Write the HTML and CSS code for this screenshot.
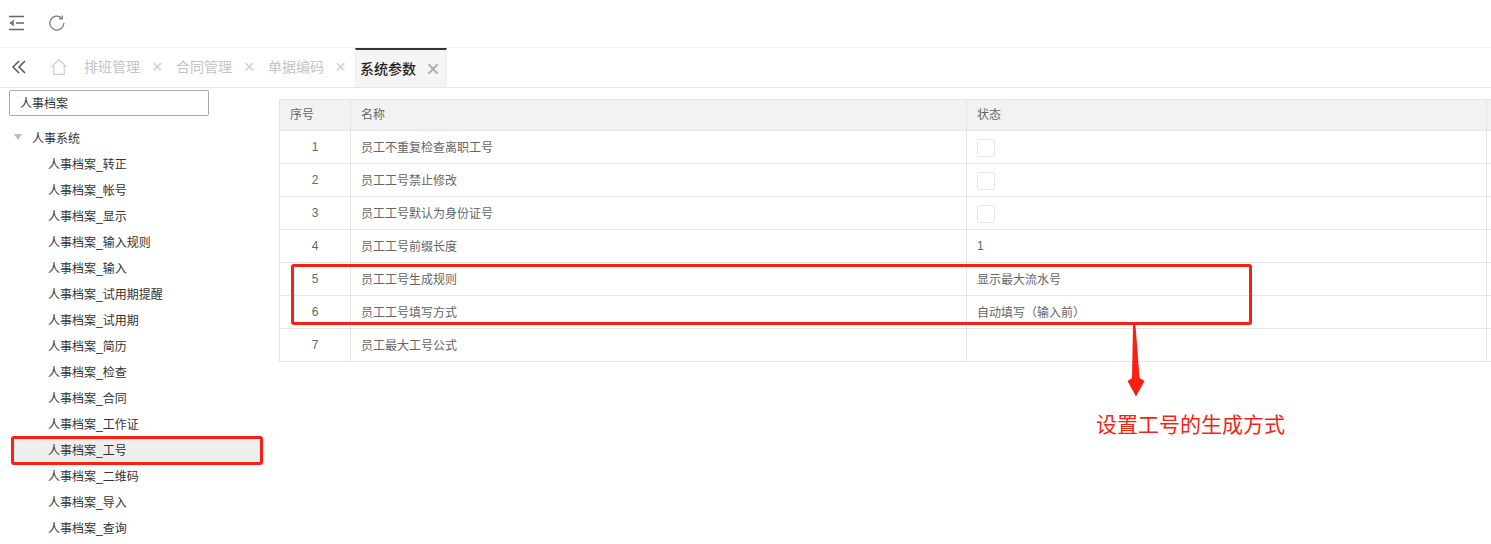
FILE: index.html
```html
<!DOCTYPE html>
<html lang="zh-CN">
<head>
<meta charset="utf-8">
<title>系统参数</title>
<link rel="stylesheet" href="styles.css">
</head>
<body>
<header class="toolbar">
  <svg class="tool-icon" width="16" height="16" viewBox="0 0 16 16" fill="none" stroke="#666" stroke-width="1.5">
    <path d="M0 1.5H15M7 8H15M0 14.5H15"/>
    <path d="M5 5.5L1.5 8L5 10.5" stroke-width="1.4"/>
    <path d="M2 8H5"/>
  </svg>
  <svg class="tool-icon" width="16" height="16" viewBox="0 0 16 16" fill="none" stroke="#777" stroke-width="1.2">
    <path d="M12.5 2.8A7 7 0 1 0 14.9 8"/>
    <path d="M13.3 0.5V3.8H10"/>
  </svg>
</header>
<nav class="tabs">
  <svg class="collapse" width="14" height="14" viewBox="0 0 14 14" fill="none" stroke="#555" stroke-width="1.5">
    <path d="M7 1L1 7L7 13M13 1L7 7L13 13"/>
  </svg>
  <svg class="home" width="18" height="16" viewBox="0 0 18 16" fill="none" stroke="#ccc" stroke-width="1.1">
    <path d="M1.6 8L9 0.8L16.4 8M3.8 7V15.4H14.2V7"/>
  </svg>
  <div class="tab tab-first"><span>排班管理</span><i class="close">×</i></div>
  <div class="tab"><span>合同管理</span><i class="close">×</i></div>
  <div class="tab"><span>单据编码</span><i class="close close-last">×</i></div>
  <div class="tab tab-active"><span>系统参数</span><i class="close">×</i></div>
</nav>
<main class="main">
  <aside class="sidebar">
    <input class="search" type="text" value="人事档案">
    <div class="tree-root"><i class="caret"></i><span>人事系统</span></div>
    <ul class="tree">
      <li>人事档案_转正</li>
      <li>人事档案_帐号</li>
      <li>人事档案_显示</li>
      <li>人事档案_输入规则</li>
      <li>人事档案_输入</li>
      <li>人事档案_试用期提醒</li>
      <li>人事档案_试用期</li>
      <li>人事档案_简历</li>
      <li>人事档案_检查</li>
      <li>人事档案_合同</li>
      <li>人事档案_工作证</li>
      <li class="selected">人事档案_工号</li>
      <li>人事档案_二维码</li>
      <li>人事档案_导入</li>
      <li>人事档案_查询</li>
    </ul>
  </aside>
  <section class="content">
    <table class="grid">
      <thead>
        <tr><th class="col-no">序号</th><th class="col-name">名称</th><th class="col-state">状态</th><th class="col-rest"></th></tr>
      </thead>
      <tbody>
        <tr><td class="no">1</td><td class="txt">员工不重复检查离职工号</td><td><span class="check"></span></td><td></td></tr>
        <tr><td class="no">2</td><td class="txt">员工工号禁止修改</td><td><span class="check"></span></td><td></td></tr>
        <tr><td class="no">3</td><td class="txt">员工工号默认为身份证号</td><td><span class="check"></span></td><td></td></tr>
        <tr><td class="no">4</td><td class="txt">员工工号前缀长度</td><td>1</td><td></td></tr>
        <tr><td class="no">5</td><td class="txt">员工工号生成规则</td><td class="txt">显示最大流水号</td><td></td></tr>
        <tr><td class="no">6</td><td class="txt">员工工号填写方式</td><td class="txt">自动填写（输入前）</td><td></td></tr>
        <tr><td class="no">7</td><td class="txt">员工最大工号公式</td><td></td><td></td></tr>
      </tbody>
    </table>
  </section>
</main>
<div class="mark mark-table"></div>
<div class="mark mark-tree"></div>
<svg class="arrow" width="18" height="74" viewBox="0 0 18 74">
  <path d="M6 1H8.5L12.5 54L17.5 57L9 72.5L0.5 57L5 54Z" fill="#fb1e13"/>
</svg>
<div class="note">设置工号的生成方式</div>
</body>
</html>
```
FILE: styles.css
```css
* { box-sizing: border-box; }
html, body { margin: 0; padding: 0; }
body {
  width: 1491px;
  height: 544px;
  overflow: hidden;
  background: #fff;
  font-family: "Liberation Sans", "Noto Sans CJK SC", sans-serif;
  font-size: 12px;
  color: #666;
  position: relative;
}
.toolbar {
  height: 48px;
  border-bottom: 1px solid #f3f3f3;
  display: flex;
  align-items: flex-start;
  gap: 24px;
  padding: 15px 0 0 9px;
}
.tabs {
  height: 40px;
  border-bottom: 1px solid #e6e6e6;
  display: flex;
  align-items: flex-start;
  font-size: 14px;
  color: #c4c4c4;
}
.collapse { margin: 12px 0 0 12px; flex: none; }
.home { margin: 11px 0 0 24px; flex: none; }
.tab {
  height: 39px;
  display: flex;
  align-items: center;
  padding-bottom: 2px;
}
.tab span { line-height: 20px; white-space: nowrap; flex: none; }
.tab-first { margin-left: 16px; }
.close {
  font-style: normal;
  font-size: 19px;
  font-weight: 400;
  color: #cfcfcf;
  width: 34px;
  margin-right: 2px;
  text-align: center;
  line-height: 20px;
  flex: none;
}
.close-last { width: 31px; margin-right: 0; padding-left: 11px; text-align: left; }
.tab-active {
  width: 92px;
  height: 39px;
  padding: 0 0 0 4px;
  background: #f5f5f5;
  border-top: 2px solid #333;
  color: #222;
  border-left: 1px solid #f0f0f0;
  border-right: 1px solid #f0f0f0;
  font-weight: 500;
}
.tab-active .close { color: #aaa; width: 30px; padding-left: 4px; margin-right: 0; font-size: 23px; }
.main { display: flex; align-items: flex-start; }
.sidebar { width: 279px; flex: none; color: #333; padding: 2px 0 0 9px; }
.search {
  display: block;
  width: 200px;
  height: 26px;
  border: 1px solid #a9a9a9;
  border-radius: 2px;
  padding: 0 10px 2px;
  font: inherit;
  color: #333;
  outline: none;
  background: #fff;
}
.tree-root {
  height: 26px;
  margin-top: 8px;
  margin-bottom: 2px;
  display: flex;
  align-items: center;
  padding-left: 5px;
}
.caret {
  width: 0;
  height: 0;
  border-left: 4.5px solid transparent;
  border-right: 4.5px solid transparent;
  border-top: 6px solid #bbb;
  margin-right: 10px;
}
.tree { list-style: none; margin: 0; padding: 0; }
.tree li { height: 26px; line-height: 26px; padding-left: 39px; width: 253px; }
.tree li.selected { background: #eee; margin-left: 2px; padding-left: 37px; width: 251px; }
.content { flex: 1; padding-top: 11px; min-width: 0; }
.grid {
  border-collapse: collapse;
  table-layout: fixed;
  width: 1212px;
  border-top: 1px solid #e6e6e6;
  border-left: 1px solid #e6e6e6;
}
.grid th, .grid td {
  border-right: 1px solid #e6e6e6;
  border-bottom: 1px solid #e6e6e6;
  padding: 0 10px;
  text-align: left;
  font-weight: 400;
  height: 33px;
  color: #666;
}
.grid th { background: #f2f2f2; height: 31px; padding-bottom: 3px; }
.grid td.txt { padding-bottom: 2px; }
.col-no { width: 71px; }
.col-name { width: 616px; }
.col-state { width: 520px; }
.col-rest { width: 5px; padding: 0 !important; }
.grid td.no { text-align: center; }
.check {
  display: block;
  width: 18px;
  height: 18px;
  margin-top: 2px;
  border: 1px solid #e6e6e6;
  border-radius: 2px;
}
.mark { position: absolute; border: 3px solid #fb1e13; border-radius: 3px; }
.mark-table { left: 291px; top: 264px; width: 961px; height: 61px; }
.mark-tree { left: 11px; top: 436px; width: 252px; height: 29px; }
.arrow { position: absolute; left: 1127px; top: 324px; }
.note {
  position: absolute;
  left: 1096px;
  top: 411px;
  font-size: 21px;
  line-height: 28px;
  color: #fb1e13;
}
```
